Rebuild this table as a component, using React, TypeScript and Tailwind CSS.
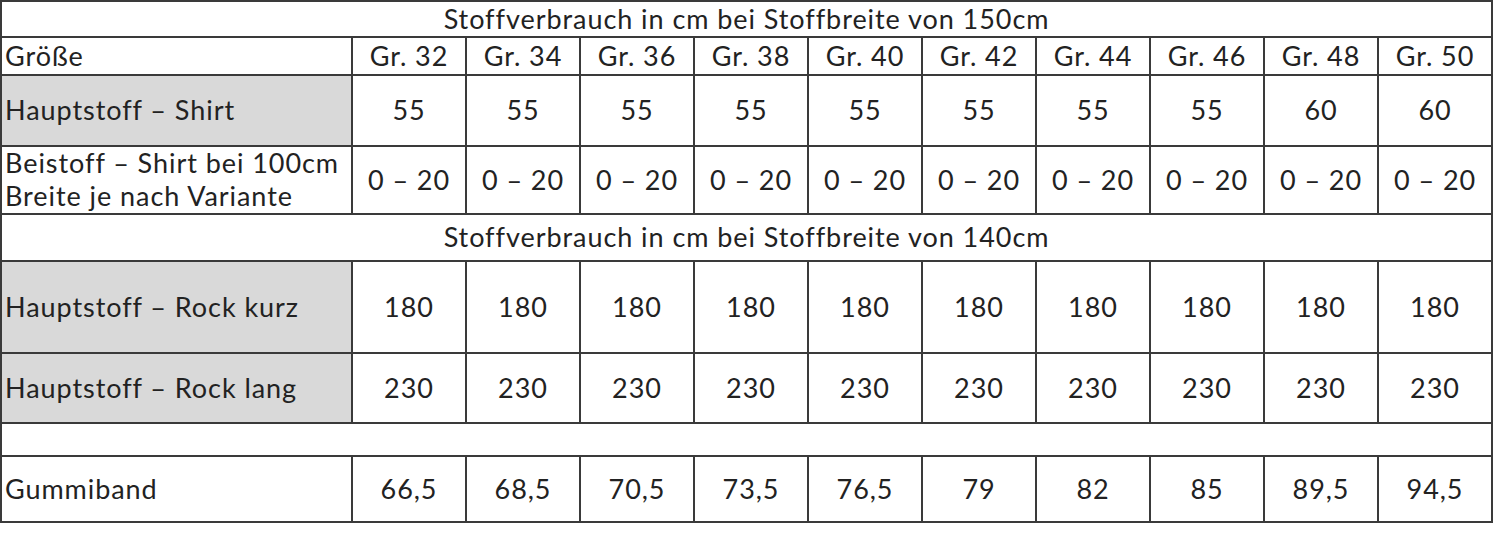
const sizes = ["Gr. 32", "Gr. 34", "Gr. 36", "Gr. 38", "Gr. 40", "Gr. 42", "Gr. 44", "Gr. 46", "Gr. 48", "Gr. 50"];

const shirt = ["55", "55", "55", "55", "55", "55", "55", "55", "60", "60"];
const beistoff = Array.from({ length: 10 }, () => "0 – 20");
const rockKurz = Array.from({ length: 10 }, () => "180");
const rockLang = Array.from({ length: 10 }, () => "230");
const gummi = ["66,5", "68,5", "70,5", "73,5", "76,5", "79", "82", "85", "89,5", "94,5"];

const cell = "border-2 border-[#3a3a3a] align-middle";

function DataRow({ label, values, grey, h }: { label: React.ReactNode; values: string[]; grey?: boolean; h: string }) {
  return (
    <tr className={h}>
      <td className={`${cell} px-[3px] text-left ${grey ? "bg-[#d9d9d9]" : ""}`}>{label}</td>
      {values.map((v, i) => (
        <td key={i} className={`${cell} text-center`}>
          {v}
        </td>
      ))}
    </tr>
  );
}

export default function App() {
  return (
    <div className="h-[540px] w-[1500px] bg-white font-['Lato','Liberation_Sans',sans-serif] text-[27px] leading-[1.22] tracking-[0.035em] text-[#222]">
      <table className="w-[1491px] table-fixed border-collapse">
        <colgroup>
          <col className="w-[351px]" />
          {sizes.map((s) => (
            <col key={s} className="w-[114px]" />
          ))}
        </colgroup>
        <tbody>
          <tr className="h-[36px]">
            <td colSpan={11} className={`${cell} text-center`}>
              Stoffverbrauch in cm bei Stoffbreite von 150cm
            </td>
          </tr>
          <tr className="h-[38px]">
            <td className={`${cell} px-[3px] text-left`}>Größe</td>
            {sizes.map((s) => (
              <td key={s} className={`${cell} text-center`}>
                {s}
              </td>
            ))}
          </tr>
          <DataRow label="Hauptstoff – Shirt" values={shirt} grey h="h-[71px]" />
          <DataRow
            label={
              <>
                Beistoff – Shirt bei 100cm
                <br />
                Breite je nach Variante
              </>
            }
            values={beistoff}
            h="h-[68px]"
          />
          <tr className="h-[47px]">
            <td colSpan={11} className={`${cell} text-center`}>
              Stoffverbrauch in cm bei Stoffbreite von 140cm
            </td>
          </tr>
          <DataRow label="Hauptstoff – Rock kurz" values={rockKurz} grey h="h-[92px]" />
          <DataRow label="Hauptstoff – Rock lang" values={rockLang} grey h="h-[70px]" />
          <tr className="h-[33px]">
            <td colSpan={11} className={cell}></td>
          </tr>
          <DataRow label="Gummiband" values={gummi} h="h-[66px]" />
        </tbody>
      </table>
    </div>
  );
}
